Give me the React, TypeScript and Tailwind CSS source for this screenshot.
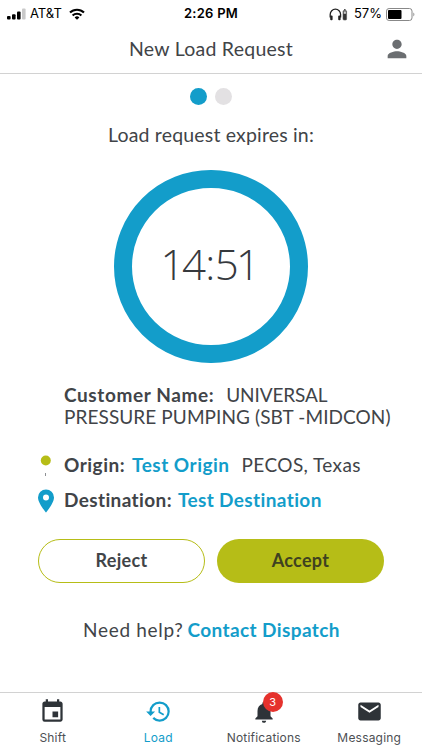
import type { ReactNode } from 'react'
import { MdEmail, MdEvent, MdHistory, MdNotifications, MdPerson } from 'react-icons/md'

type TabProps = {
  label: string
  icon: ReactNode
  active?: boolean
  badge?: number
}

function StatusBar() {
  return (
    <div className="flex h-7 items-center font-['Inter',sans-serif] text-[13px] text-black">
      <div className="flex flex-1 items-center pl-[7px]">
        <svg width="19" height="12" viewBox="0 0 19 12">
          <rect x="0" y="8" width="3.6" height="3.6" rx="1" />
          <rect x="5" y="6.2" width="3.6" height="5.4" rx="1" />
          <rect x="10" y="3.6" width="3.6" height="8" rx="1" />
          <rect x="15" y="0.4" width="3.6" height="11.2" rx="1" fill="#c9c9c9" />
        </svg>
        <span className="ml-1 whitespace-nowrap">AT&amp;T</span>
        <svg className="ml-[7px]" width="16" height="12" viewBox="0 0 16 12" fill="none" stroke="#000" strokeWidth="2.1">
          <path d="M1 4.6a10 10 0 0 1 14 0" />
          <path d="M3.6 7.6a6.3 6.3 0 0 1 8.8 0" />
          <path d="M8 11.8 5.6 9.4a3.4 3.4 0 0 1 4.8 0z" fill="#000" stroke="none" />
        </svg>
      </div>
      <span className="whitespace-nowrap font-semibold tracking-[0.25px]">2:26 PM</span>
      <div className="flex flex-1 items-center justify-end pr-[7px]">
        <svg width="19" height="13" viewBox="0 0 19 13" fill="none">
          <path d="M1.2 9.500V6.400a5.200 5.200 0 0 1 10.400 0v3.100" stroke="#222" strokeWidth="1.3" />
          <rect x="1.2" y="7.4" width="2.4" height="4.8" rx="1" fill="#222" />
          <rect x="9.2" y="7.4" width="2.4" height="4.8" rx="1" fill="#222" />
          <rect x="14" y="2.5" width="3.6" height="9.5" rx="1" fill="#333" stroke="#555" strokeWidth="0.6" />
          <rect x="15" y="1" width="1.6" height="1.4" fill="#555" />
          <rect x="14.7" y="3.4" width="2.2" height="2.4" fill="#ccc" />
        </svg>
        <span className="ml-[6px] whitespace-nowrap">57%</span>
        <svg className="ml-1" width="29" height="13" viewBox="0 0 29 13">
          <rect x="0.5" y="0.5" width="25.5" height="12" rx="2.6" fill="none" stroke="#888" />
          <rect x="2" y="2" width="13.5" height="9" rx="1" />
          <path d="M27.4 4.6c1.3.6 1.3 3.2 0 3.8z" fill="#888" />
        </svg>
      </div>
    </div>
  )
}

function Header() {
  return (
    <header className="flex h-[46px] items-center border-b border-[#d2d2d2] pb-[3px]">
      <div className="w-[50px]" />
      <h1 className="flex-1 whitespace-nowrap text-center text-[19.5px] tracking-[0.25px]">New Load Request</h1>
      <div className="w-[50px] pl-[11px]">
        <MdPerson className="size-[28px] text-[#6b6e71]" />
      </div>
    </header>
  )
}

function Tab({ label, icon, active, badge }: TabProps) {
  return (
    <button
      type="button"
      className={`flex flex-1 flex-col items-center pt-[5px] ${active ? 'text-[#139dca]' : 'text-[#2e3338]'}`}
    >
      <span className="relative flex h-[27px] items-center">
        {icon}
        {badge && (
          <span className="absolute -top-[6px] left-[12px] flex size-5 items-center justify-center rounded-full bg-[#e5322d] font-['Inter',sans-serif] text-[11px] text-white">
            {badge}
          </span>
        )}
      </span>
      <span
        className={`mt-[5px] whitespace-nowrap font-['Inter',sans-serif] text-xs leading-4 tracking-[0.2px] ${active ? '' : 'text-[#4d5054]'}`}
      >
        {label}
      </span>
    </button>
  )
}

export default function App() {
  return (
    <div className="flex h-[750px] w-[422px] flex-col overflow-hidden bg-white font-['Lato',sans-serif] text-[#414448]">
      <StatusBar />
      <Header />

      <main className="flex flex-1 flex-col">
        <div className="mt-[14px] flex justify-center gap-2">
          <span className="size-[17px] rounded-full bg-[#139dca]" />
          <span className="size-[17px] rounded-full bg-[#e3e1e3]" />
        </div>
        <p className="mt-[18px] whitespace-nowrap text-center text-[19.5px] leading-6 tracking-[0.17px]">
          Load request expires in:
        </p>
        <div className="mx-auto mt-[23px] flex h-[193px] w-[194px] items-center justify-center rounded-full border-[18px] border-[#139dca]">
          <span className="whitespace-nowrap pr-1 pb-[5px] font-['Open_Sans',sans-serif] text-[42px] font-light leading-none tracking-[-2.6px] text-[#36393d]">
            14<span className="mr-[2px] ml-[2px]">:</span>51
          </span>
        </div>

        <div className="mt-[21px] pl-16 text-[19px] leading-[22px]">
          <p className="whitespace-nowrap">
            <span className="mr-3 font-bold tracking-[0.6px]">Customer Name:</span>
            <span className="tracking-[-0.1px]">UNIVERSAL</span>
          </p>
          <p className="whitespace-nowrap tracking-[0.08px]">PRESSURE PUMPING (SBT -MIDCON)</p>
        </div>

        <div className="mt-5 flex h-[35px] items-center text-[19px]">
          <span className="flex w-16 pl-10">
            <svg width="11" height="22" viewBox="0 0 11 22">
              <circle cx="5.8" cy="5.5" r="5" fill="#b6bd17" />
              <rect x="5" y="18" width="1" height="3" fill="#8d9094" />
            </svg>
          </span>
          <span className="whitespace-nowrap font-bold tracking-[0.5px]">Origin:</span>
          <span className="ml-[7px] whitespace-nowrap font-bold tracking-[0.5px] text-[#139dca]">Test Origin</span>
          <span className="ml-3 whitespace-nowrap tracking-[0.4px]">PECOS, Texas</span>
        </div>
        <div className="flex h-[35px] items-center text-[19px]">
          <span className="flex w-16 pl-[37px]">
            <svg width="18" height="24" viewBox="0 0 18 24">
              <path
                fill="#139dca"
                fillRule="evenodd"
                d="M9 .5a8 8 0 0 0-8 8C1 14.3 9 23.5 9 23.5s8-9.2 8-15a8 8 0 0 0-8-8zm0 5.1a3 3 0 1 1 0 6 3 3 0 0 1 0-6z"
              />
            </svg>
          </span>
          <span className="whitespace-nowrap font-bold tracking-[0.38px]">Destination:</span>
          <span className="ml-[6px] whitespace-nowrap font-bold tracking-[0.38px] text-[#139dca]">Test Destination</span>
        </div>

        <div className="mt-[21px] flex gap-3 px-[38px]">
          <button
            type="button"
            className="h-11 w-[167px] rounded-full border border-[#b6bd17] pb-0.5 text-[18px] font-bold tracking-[0.3px]"
          >
            Reject
          </button>
          <button
            type="button"
            className="h-11 w-[167px] rounded-full bg-[#b6bd17] pb-0.5 text-[18px] font-bold tracking-[0.3px] text-[#3f4220]"
          >
            Accept
          </button>
        </div>

        <p className="mt-[35px] flex pl-[83px] text-[19px] leading-6">
          <span className="whitespace-nowrap tracking-[0.7px]">Need help?</span>
          <a className="ml-1 whitespace-nowrap font-bold tracking-[0.4px] text-[#139dca]">Contact Dispatch</a>
        </p>
      </main>

      <nav className="flex h-[58px] border-t border-[#d2d2d2]">
        <Tab label="Shift" icon={<MdEvent className="size-[27px]" />} />
        <Tab label="Load" active icon={<MdHistory className="size-[27px]" />} />
        <Tab label="Notifications" badge={3} icon={<MdNotifications className="size-[26px]" />} />
        <Tab label="Messaging" icon={<MdEmail className="size-[27px]" />} />
      </nav>
    </div>
  )
}
